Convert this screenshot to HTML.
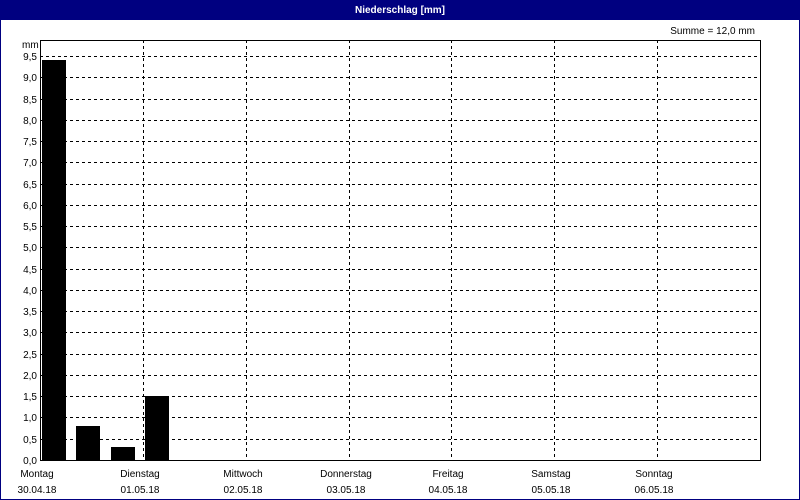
<!DOCTYPE html>
<html><head><meta charset="utf-8"><style>
body{margin:0;width:800px;height:500px;overflow:hidden;background:#fff}
svg{display:block;font-family:"Liberation Sans",Tahoma,sans-serif}
</style></head><body>
<svg width="800" height="500" viewBox="0 0 800 500" xmlns="http://www.w3.org/2000/svg">
<rect x="0" y="0" width="800" height="500" fill="#fff"/>
<rect x="0.5" y="0.5" width="799" height="499" fill="none" stroke="#000080"/>
<rect x="0" y="0" width="800" height="20" fill="#000080"/>
<text x="400" y="13" fill="#fff" font-size="10" font-weight="bold" text-anchor="middle">Niederschlag [mm]</text>
<text x="755" y="34" font-size="10" text-anchor="end" fill="#000">Summe = 12,0 mm</text>
<text x="22" y="48" font-size="10" fill="#000">mm</text>
<g stroke="#000" stroke-width="1" stroke-dasharray="3,3" shape-rendering="crispEdges">
<path d="M40 56.5H760M40 77.5H760M40 99.5H760M40 120.5H760M40 141.5H760M40 162.5H760M40 184.5H760M40 205.5H760M40 226.5H760M40 247.5H760M40 269.5H760M40 290.5H760M40 311.5H760M40 332.5H760M40 354.5H760M40 375.5H760M40 396.5H760M40 417.5H760M40 439.5H760"/>
<path d="M143.5 40V460M246.5 40V460M349.5 40V460M451.5 40V460M554.5 40V460M657.5 40V460"/>
</g>
<rect x="40.5" y="40.5" width="720" height="420" fill="none" stroke="#000" shape-rendering="crispEdges"/>
<g fill="#000" shape-rendering="crispEdges">
<rect x="42" y="60" width="24" height="400"/>
<rect x="76" y="426" width="24" height="34"/>
<rect x="111" y="447" width="24" height="13"/>
<rect x="145" y="396" width="24" height="64"/>
</g>
<g font-size="10" text-anchor="end" fill="#000">
<text x="37" y="60">9,5</text><text x="37" y="81">9,0</text><text x="37" y="103">8,5</text><text x="37" y="124">8,0</text><text x="37" y="145">7,5</text><text x="37" y="166">7,0</text><text x="37" y="188">6,5</text><text x="37" y="209">6,0</text><text x="37" y="230">5,5</text><text x="37" y="251">5,0</text><text x="37" y="273">4,5</text><text x="37" y="294">4,0</text><text x="37" y="315">3,5</text><text x="37" y="336">3,0</text><text x="37" y="358">2,5</text><text x="37" y="379">2,0</text><text x="37" y="400">1,5</text><text x="37" y="421">1,0</text><text x="37" y="443">0,5</text><text x="37" y="464">0,0</text>
</g>
<g font-size="10" text-anchor="middle" fill="#000">
<text x="37" y="477">Montag</text><text x="37" y="493">30.04.18</text>
<text x="140" y="477">Dienstag</text><text x="140" y="493">01.05.18</text>
<text x="243" y="477">Mittwoch</text><text x="243" y="493">02.05.18</text>
<text x="346" y="477">Donnerstag</text><text x="346" y="493">03.05.18</text>
<text x="448" y="477">Freitag</text><text x="448" y="493">04.05.18</text>
<text x="551" y="477">Samstag</text><text x="551" y="493">05.05.18</text>
<text x="654" y="477">Sonntag</text><text x="654" y="493">06.05.18</text>
</g>
</svg>
</body></html>
